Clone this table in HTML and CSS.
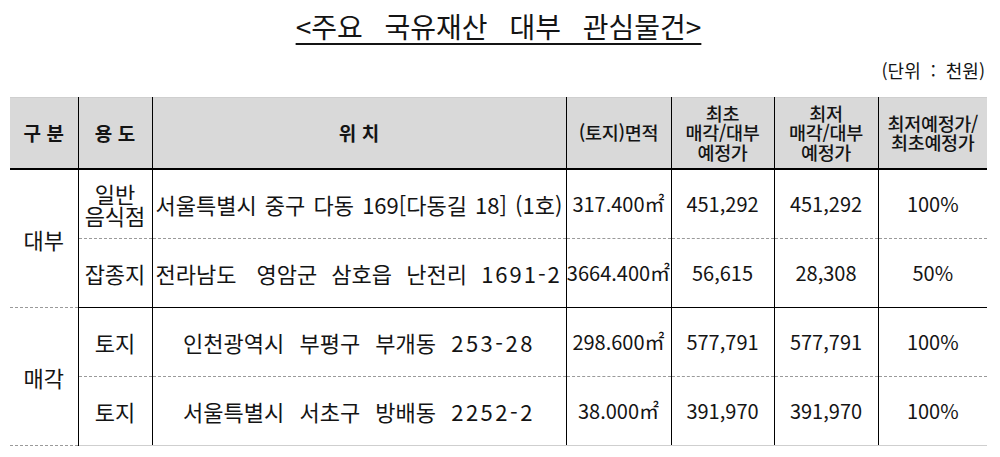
FILE: index.html
```html
<!DOCTYPE html>
<html lang="ko">
<head>
<meta charset="utf-8">
<link rel="stylesheet" href="styles.css">
</head>
<body>
<div class="page">
  <h1 class="title"><span class="title-text">&lt;주요 국유재산 대부 관심물건&gt;</span></h1>
  <div class="unit">(단위 : 천원)</div>
  <table class="grid">
    <colgroup>
      <col class="c1"><col class="c2"><col class="c3"><col class="c4"><col class="c5"><col class="c6"><col class="c7">
    </colgroup>
    <thead>
      <tr>
        <th class="strong">구 분</th>
        <th class="strong">용 도</th>
        <th class="strong">위 치</th>
        <th>(토지)면적</th>
        <th>최초<br>매각/대부<br>예정가</th>
        <th>최저<br>매각/대부<br>예정가</th>
        <th>최저예정가/<br>최초예정가</th>
      </tr>
    </thead>
    <tbody>
      <tr class="dash">
        <td rowspan="2" class="grp">대부</td>
        <td class="use">일반<br>음식점</td>
        <td class="loc left tight">서울특별시 중구 다동 169[다동길 18] (1호)</td>
        <td class="num">317.400㎡</td>
        <td class="num">451,292</td>
        <td class="num">451,292</td>
        <td class="num">100%</td>
      </tr>
      <tr class="end">
        <td>잡종지</td>
        <td class="loc left mid">전라남도<span class="gap"></span>영암군 삼호읍 난전리 <span class="n1">1691-2</span></td>
        <td class="num">3664.400㎡</td>
        <td class="num">56,615</td>
        <td class="num">28,308</td>
        <td class="num">50%</td>
      </tr>
      <tr class="dash">
        <td rowspan="2" class="grp">매각</td>
        <td>토지</td>
        <td class="loc wide">인천광역시 부평구 부개동 <span class="n2">253-28</span></td>
        <td class="num">298.600㎡</td>
        <td class="num">577,791</td>
        <td class="num">577,791</td>
        <td class="num">100%</td>
      </tr>
      <tr class="last">
        <td>토지</td>
        <td class="loc wide">서울특별시 서초구 방배동 <span class="n2">2252-2</span></td>
        <td class="num">38.000㎡</td>
        <td class="num">391,970</td>
        <td class="num">391,970</td>
        <td class="num">100%</td>
      </tr>
    </tbody>
  </table>
</div>
</body>
</html>
```

FILE: styles.css
```css
html, body {
  margin: 0;
  padding: 0;
  background: #fff;
}
.page {
  padding: 0 13px 0 10px;
  font-family: "Noto Sans CJK KR", "Noto Sans", sans-serif;
  color: #141414;
}
.title {
  margin: 0;
  padding-top: 11px;
  height: 37px;
  text-align: center;
  font-size: 28px;
  font-weight: 400;
  line-height: 30px;
}
.title-text {
  word-spacing: 14px;
  text-decoration: underline;
  text-underline-offset: 5px;
  text-decoration-thickness: 1.5px;
}
.unit {
  text-align: right;
  font-size: 18px;
  line-height: 24px;
  height: 49px;
  padding-top: 10px;
  padding-right: 2px;
  box-sizing: border-box;
  word-spacing: 5px;
}
.grid {
  width: 977px;
  border-collapse: collapse;
  table-layout: fixed;
  font-size: 22px;
}
.c1 { width: 68px; }
.c2 { width: 74px; }
.c3 { width: 414px; }
.c4 { width: 105px; }
.c5 { width: 103px; }
.c6 { width: 104px; }
.c7 { width: 109px; }
.grid th, .grid td {
  padding: 0;
  text-align: center;
  vertical-align: middle;
  border-left: 1.5px solid #000;
  border-right: 1.5px solid #000;
  white-space: nowrap;
  overflow: hidden;
}
.grid th:first-child, .grid td.grp { border-left: none; }
.grid th:last-child, .grid td:last-child { border-right: none; }
.grid thead th {
  background: #d9d9d9;
  height: 70px;
  font-weight: 500;
  font-size: 18.5px;
  border-top: 1px solid #cfcfcf;
  border-bottom: 2px solid #000;
  line-height: 19.5px;
  letter-spacing: -0.3px;
}
.grid thead th.strong { font-weight: 700; font-size: 19px; letter-spacing: 0; }
.grid tbody td { height: 68px; line-height: 24px; }
.grid tr.dash td { border-bottom: 1px dashed #9a9a9a; }
.grid tr.end td, .grid td.grp { border-bottom: 1.5px solid #000; }
.grid tr.last td { border-bottom: 1.5px solid #cfcfcf; }
.grid td.use { line-height: 22px; }
.grid td.left { text-align: left; padding-left: 3px; }
.grid td.tight { word-spacing: 2px; }
.grid td.mid { word-spacing: 8px; }
.grid td.wide { word-spacing: 9px; }
.n1 { letter-spacing: 2px; }
.n2 { letter-spacing: 2.5px; }
.grid td.num { font-size: 20px; }
.gap { display: inline-block; width: 20px; }
```
